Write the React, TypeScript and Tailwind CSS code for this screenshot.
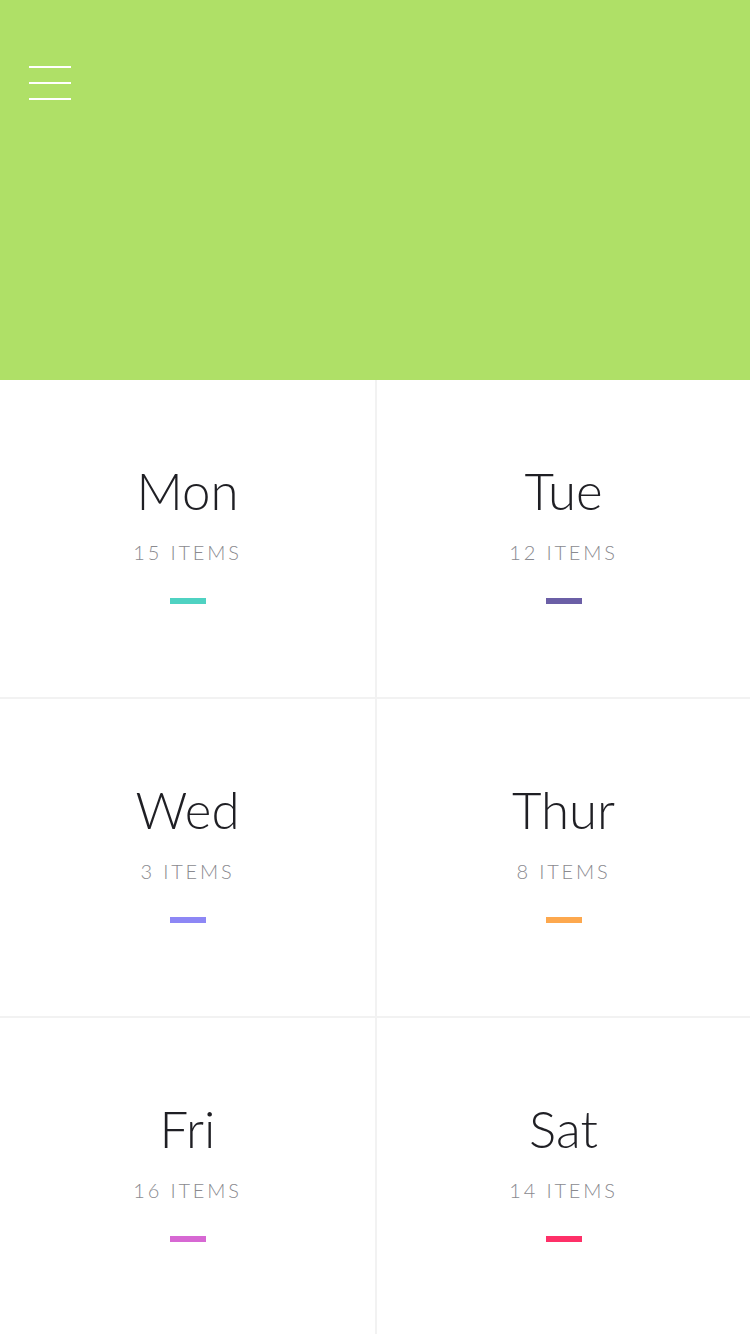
const DAYS = [
  { name: 'Mon', count: 15, color: '#4fd2c2' },
  { name: 'Tue', count: 12, color: '#6b5fa6' },
  { name: 'Wed', count: 3, color: '#8d87f5' },
  { name: 'Thur', count: 8, color: '#fda84e' },
  { name: 'Fri', count: 16, color: '#d768d3' },
  { name: 'Sat', count: 14, color: '#fe3068' },
];

function DayCell({ name, count, color, index }: { name: string; count: number; color: string; index: number }) {
  return (
    <div
      className={
        'h-[319px] flex flex-col items-center pt-[85px] border-b-2 border-[#f2f2f2] ' +
        (index % 2 === 1 ? 'border-l-2' : '')
      }
    >
      <div className="text-[51px] leading-none font-light text-[#1f1f24]">{name}</div>
      <div className="mt-[26px] text-[20px] leading-none font-light tracking-[2.8px] text-[#8a8a8f]">
        {count} ITEMS
      </div>
      <div className="mt-[36px] h-[6px] w-[36px]" style={{ background: color }} />
    </div>
  );
}

export default function App() {
  return (
    <div className="w-[750px] h-[1334px] overflow-hidden bg-white" style={{ fontFamily: 'Lato, "Open Sans", sans-serif' }}>
      <header className="h-[380px] bg-[#afe067] pt-[66px] pl-[29px]">
        <button className="flex flex-col gap-[14px] w-[42px]">
          <span className="block h-[2px] w-full bg-white" />
          <span className="block h-[2px] w-full bg-white" />
          <span className="block h-[2px] w-full bg-white" />
        </button>
      </header>
      <div className="grid grid-cols-2">
        {DAYS.map((d, i) => (
          <DayCell key={d.name} {...d} index={i} />
        ))}
      </div>
    </div>
  );
}
